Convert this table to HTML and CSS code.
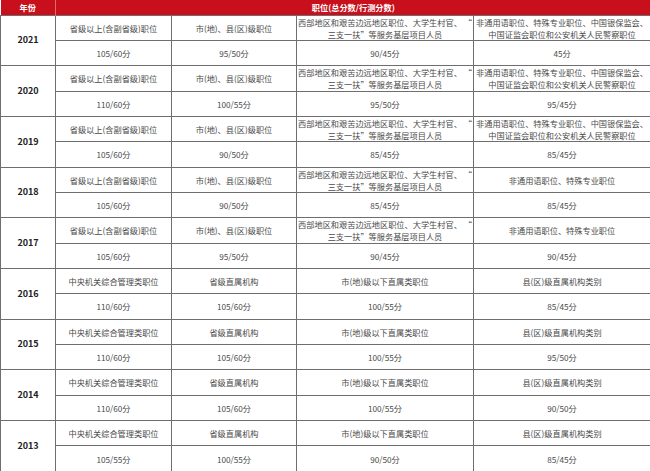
FILE: index.html
```html
<!DOCTYPE html>
<html lang="zh">
<head>
<meta charset="utf-8">
<title>历年国考分数线</title>
<link rel="stylesheet" href="styles.css">
</head>
<body>
<table class="score">
<colgroup>
<col class="c-year"><col class="c-a"><col class="c-b"><col class="c-c"><col class="c-d">
</colgroup>
<thead>
<tr class="head"><th>年份</th><th colspan="4">职位(总分数/行测分数)</th></tr>
</thead>
<tbody>
<tr><td class="year" rowspan="2">2021</td><td>省级以上(含副省级)职位</td><td>市(地)、县(区)级职位</td><td class="two">西部地区和艰苦边远地区职位、大学生村官、 “<br>三支一扶”等服务基层项目人员</td><td class="two">非通用语职位、特殊专业职位、中国银保监会、<br>中国证监会职位和公安机关人民警察职位</td></tr>
<tr><td>105/60分</td><td>95/50分</td><td>90/45分</td><td>45分</td></tr>

<tr><td class="year" rowspan="2">2020</td><td>省级以上(含副省级)职位</td><td>市(地)、县(区)级职位</td><td class="two">西部地区和艰苦边远地区职位、大学生村官、 “<br>三支一扶”等服务基层项目人员</td><td class="two">非通用语职位、特殊专业职位、中国银保监会、<br>中国证监会职位和公安机关人民警察职位</td></tr>
<tr><td>110/60分</td><td>100/55分</td><td>95/50分</td><td>95/45分</td></tr>

<tr><td class="year" rowspan="2">2019</td><td>省级以上(含副省级)职位</td><td>市(地)、县(区)级职位</td><td class="two">西部地区和艰苦边远地区职位、大学生村官、 “<br>三支一扶”等服务基层项目人员</td><td class="two">非通用语职位、特殊专业职位、中国银保监会、<br>中国证监会职位和公安机关人民警察职位</td></tr>
<tr><td>105/60分</td><td>90/50分</td><td>85/45分</td><td>85/45分</td></tr>

<tr><td class="year" rowspan="2">2018</td><td>省级以上(含副省级)职位</td><td>市(地)、县(区)级职位</td><td class="two">西部地区和艰苦边远地区职位、大学生村官、 “<br>三支一扶”等服务基层项目人员</td><td>非通用语职位、特殊专业职位</td></tr>
<tr><td>105/60分</td><td>90/50分</td><td>85/45分</td><td>85/45分</td></tr>

<tr><td class="year" rowspan="2">2017</td><td>省级以上(含副省级)职位</td><td>市(地)、县(区)级职位</td><td class="two">西部地区和艰苦边远地区职位、大学生村官、 “<br>三支一扶”等服务基层项目人员</td><td>非通用语职位、特殊专业职位</td></tr>
<tr><td>105/60分</td><td>95/50分</td><td>90/45分</td><td>90/45分</td></tr>

<tr><td class="year" rowspan="2">2016</td><td>中央机关综合管理类职位</td><td>省级直属机构</td><td>市(地)级以下直属类职位</td><td>县(区)级直属机构类别</td></tr>
<tr><td>110/60分</td><td>105/60分</td><td>100/55分</td><td>85/45分</td></tr>

<tr><td class="year" rowspan="2">2015</td><td>中央机关综合管理类职位</td><td>省级直属机构</td><td>市(地)级以下直属类职位</td><td>县(区)级直属机构类别</td></tr>
<tr><td>110/60分</td><td>105/60分</td><td>100/55分</td><td>95/50分</td></tr>

<tr><td class="year" rowspan="2">2014</td><td>中央机关综合管理类职位</td><td>省级直属机构</td><td>市(地)级以下直属类职位</td><td>县(区)级直属机构类别</td></tr>
<tr><td>110/60分</td><td>105/60分</td><td>100/55分</td><td>90/50分</td></tr>

<tr><td class="year" rowspan="2">2013</td><td>中央机关综合管理类职位</td><td>省级直属机构</td><td>市(地)级以下直属类职位</td><td>县(区)级直属机构类别</td></tr>
<tr><td>105/55分</td><td>100/55分</td><td>90/50分</td><td>85/45分</td></tr>
</tbody>
</table>
</body>
</html>
```
FILE: styles.css
```css
html, body {
  margin: 0;
  padding: 0;
  background: #ffffff;
}

.score {
  width: 650px;
  table-layout: fixed;
  border-collapse: collapse;
  font-family: "Noto Sans CJK SC", "Noto Sans", sans-serif;
  font-size: 8.2px;
  color: #4a4a4a;
}

.c-year { width: 55px; }
.c-a { width: 116px; }
.c-b { width: 125px; }
.c-c { width: 177px; }
.c-d { width: 177px; }

.head {
  height: 15px;
}

.head th {
  background: #c8101c;
  color: #ffffff;
  font-weight: bold;
  font-size: 8.2px;
  line-height: 10px;
  padding: 0;
  border: 0;
  text-align: center;
}

.head th:first-child {
  border-right: 1px solid #e4686f;
}

.score tbody tr {
  height: 25.35px;
}

.score td {
  border: 1px solid #6e6e6e;
  padding: 0;
  text-align: center;
  vertical-align: middle;
  line-height: 12px;
  white-space: nowrap;
}

.score td.year {
  font-weight: bold;
  font-size: 9px;
  color: #222222;
}

.score td.two {
  line-height: 12px;
}
```
